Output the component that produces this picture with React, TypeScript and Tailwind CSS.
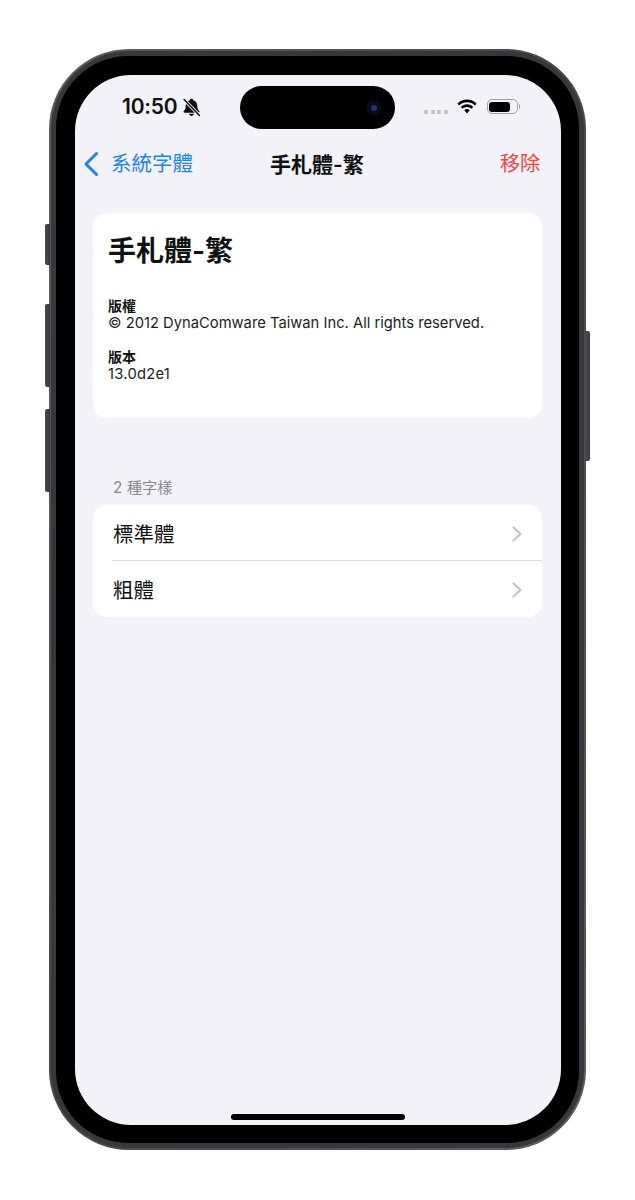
import React from "react";

const SideButton = ({ className }: { className: string }) => (
  <div className={`absolute w-[5px] bg-gradient-to-r from-[#4a4a50] to-[#3a3a3f] ${className}`} />
);

const BellOff = () => (
  <svg width="19" height="19" viewBox="0 0 18 18" className="ml-[4px] mt-[1px]">
    <path
      d="M9 .8c.9 0 1.500.5 1.600 1.300 2.500.7 3.900 2.700 3.900 5.300 0 2.400.5 3.600 1.800 4.900.6.6.2 1.600-.6 1.600H2.300c-.8 0-1.200-1-.6-1.600C3 11 3.500 9.800 3.500 7.400c0-2.600 1.400-4.600 3.900-5.300C7.500 1.300 8.100.800 9 .800z"
      fill="#111"
    />
    <path d="M6.700 15h4.600c-.2 1.300-1.100 2.100-2.300 2.100S6.900 16.300 6.700 15z" fill="#111" />
    <path d="M2 1.500 16.500 16.500" stroke="#f2f2f7" strokeWidth="3" />
    <path d="M2 1.500 16.500 16.500" stroke="#111" strokeWidth="1.400" strokeLinecap="round" />
  </svg>
);

const Wifi = () => (
  <svg width="22" height="16" viewBox="0 0 22 16">
    <path d="M11 3.200c3 0 5.800 1.200 7.900 3.200l1.700-1.900C18 2 14.600.5 11 .5S4 2 1.400 4.500l1.700 1.900c2.100-2 4.900-3.200 7.900-3.200z" fill="#000" />
    <path d="M11 8c1.700 0 3.300.7 4.500 1.800l1.700-1.900C15.500 6.300 13.300 5.300 11 5.300S6.500 6.300 4.800 7.900l1.700 1.900C7.700 8.700 9.300 8 11 8z" fill="#000" />
    <path d="M11 10.100c-1 0-2 .4-2.700 1.100L11 14.500l2.700-3.300c-.7-.7-1.700-1.100-2.700-1.100z" fill="#000" />
  </svg>
);

const Battery = () => (
  <div className="flex items-center">
    <div className="w-[31px] h-[15px] rounded-[5px] border border-[#a0a0a4] p-[1.500px] flex">
      <div className="w-[21px] h-full rounded-[3px] bg-black" />
    </div>
    <div className="ml-[1px] w-[1.500px] h-[5px] rounded-r bg-[#a0a0a4]" />
  </div>
);

const Chevron = () => (
  <svg width="12" height="18" viewBox="0 0 12 18" fill="none" className="-mt-[3px]">
    <path d="M2.500 2.500 9.500 9l-7 6.500" stroke="#c4c4c7" strokeWidth="2.200" strokeLinecap="round" strokeLinejoin="round" />
  </svg>
);

export default function App() {
  return (
    <div
      className="w-[635px] h-[1200px] bg-white pt-[49px] pl-[49px]"
      style={{ fontFamily: '"Inter", "Noto Sans CJK TC", sans-serif' }}
    >
      <div className="relative w-[537px] h-[1101px] rounded-[80px] bg-gradient-to-br from-[#5c5c62] via-[#47474c] to-[#5c5c62] p-[2px]">
        <SideButton className="left-[-4px] top-[175px] h-[41px] rounded-l-[2px]" />
        <SideButton className="left-[-4px] top-[255px] h-[83px] rounded-l-[2px]" />
        <SideButton className="left-[-4px] top-[360px] h-[83px] rounded-l-[2px]" />
        <SideButton className="right-[-4px] top-[282px] h-[130px] rounded-r-[2px]" />

        <div className="w-full h-full rounded-[78px] bg-[#38383c] p-[5px]">
          <div className="w-full h-full rounded-[72px] bg-black pt-[19px] pb-[21px] pl-[19px] pr-[21px]">
            <div className="relative w-[486px] h-[1050px] rounded-[56px] bg-[#f2f2f8] overflow-hidden flex flex-col">
              {/* dynamic island */}
              <div className="absolute left-[165px] top-[11px] w-[155px] h-[43px] rounded-full bg-black">
                <div className="absolute left-[126px] top-[14px] w-[15px] h-[15px] rounded-full bg-[#0b0b1e] flex items-center justify-center">
                  <div className="w-[6px] h-[6px] rounded-full bg-[#22336e]" />
                </div>
              </div>

              {/* status bar */}
              <div className="h-[62px] shrink-0 flex items-center pl-[47px] pr-[41px] pt-[1px]">
                <span className="text-[21px] font-semibold leading-none text-[#111] tracking-[-0.2px]">10:50</span>
                <BellOff />
                <div className="ml-auto flex items-center">
                  <div className="flex gap-[2.500px] mt-[10px] mr-[8px]">
                    <div className="w-[4px] h-[4px] rounded-[1px] bg-[#c4c4c8]" />
                    <div className="w-[4px] h-[4px] rounded-[1px] bg-[#c4c4c8]" />
                    <div className="w-[4px] h-[4px] rounded-[1px] bg-[#c4c4c8]" />
                    <div className="w-[4px] h-[4px] rounded-[1px] bg-[#c4c4c8]" />
                  </div>
                  <Wifi />
                  <div className="w-[9px]" />
                  <Battery />
                </div>
              </div>

              {/* nav bar */}
              <div className="relative h-[54px] shrink-0 flex items-center pl-[8px] pr-[21px]">
                <svg width="16" height="26" viewBox="0 0 16 26" fill="none">
                  <path d="M13.500 2.500 3 13l10.500 10.500" stroke="#1f84ee" strokeWidth="3" strokeLinecap="round" strokeLinejoin="round" />
                </svg>
                <span className="ml-[12px] text-[20.500px] leading-none text-[#1f84ee]">系統字體</span>
                <span className="absolute left-[195px] text-[21px] leading-none font-semibold text-[#111]">手札體-繁</span>
                <span className="ml-auto text-[20px] leading-none text-[#f2453d]">移除</span>
              </div>

              {/* font info */}
              <div className="mt-[22px] ml-[18px] mr-[19px] h-[205px] shrink-0 rounded-[14px] bg-white pl-[15px] pt-[20px]">
                <div className="text-[28px] leading-[36px] font-semibold text-[#111]">手札體-繁</div>
                <div className="mt-[28px] text-[14px] leading-[17px] font-semibold text-[#111]">版權</div>
                <div className="text-[14.750px] leading-[18px] text-[#1c1c1e]">© 2012 DynaComware Taiwan Inc. All rights reserved.</div>
                <div className="mt-[16px] text-[14px] leading-[17px] font-semibold text-[#111]">版本</div>
                <div className="text-[14.750px] leading-[18px] tracking-[0.25px] text-[#1c1c1e]">13.0d2e1</div>
              </div>

              {/* styles */}
              <div className="mt-[59px] ml-[38px] h-[21px] text-[15.300px] leading-[22px] text-[#8a8a8e]">2 種字樣</div>
              <div className="mt-[7px] ml-[18px] mr-[19px] rounded-[14px] bg-white">
                <div className="h-[55px] pl-[20px] pr-[19px] pt-[5px] flex items-center justify-between text-[20.500px] text-[#111]">
                  <span>標準體</span>
                  <Chevron />
                </div>
                <div className="ml-[19px] h-px bg-[#dfdfe2]" />
                <div className="h-[56px] pl-[20px] pr-[19px] pt-[5px] flex items-center justify-between text-[20.500px] text-[#111]">
                  <span>粗體</span>
                  <Chevron />
                </div>
              </div>

              {/* home indicator */}
              <div className="mt-auto mb-[5px] mx-auto w-[174px] h-[6px] rounded-full bg-black" />
            </div>
          </div>
        </div>
      </div>
    </div>
  );
}
